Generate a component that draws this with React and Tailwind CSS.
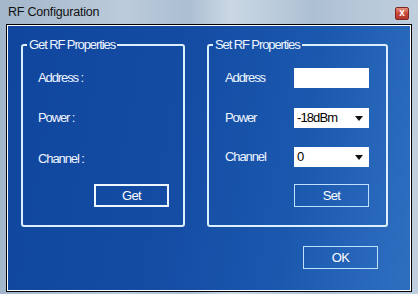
import React from 'react'

const font = { fontFamily: '"Liberation Sans", Arial, sans-serif' }

const Caret = () => (
  <svg width="8" height="5" viewBox="0 0 8 5" className="shrink-0">
    <path d="M0 0 H8 L4 5 Z" fill="#111" />
  </svg>
)

const Field = ({ children, className = '' }) => (
  <div className={`w-[75px] h-[20px] bg-white flex items-center pl-[3px] pr-[6px] text-[13px] tracking-[-0.9px] text-black ${className}`}>
    {children}
  </div>
)

const Select = ({ value }) => (
  <Field className="justify-between">
    <span>{value}</span>
    <Caret />
  </Field>
)

const Label = ({ children }) => (
  <div className="h-[20px] flex items-center text-[13px] tracking-[-1.1px] text-[#eef5ff]">{children}</div>
)

const Button = ({ children, bold }) => (
  <button
    className={`w-[75px] h-[23px] flex items-center justify-center text-[13px] text-white tracking-[-0.6px] ${
      bold ? 'border-2 border-[#eef7ff]' : 'border border-[#bfe0ff]'
    }`}
  >
    {children}
  </button>
)

const Group = ({ title, width, padX, children, button }) => (
  <fieldset className={`${width} h-[189px] border-2 border-[#dcefff] rounded-[3px] min-w-0`}>
    <legend className="ml-[4px] px-[2px] h-[14px] leading-[14px] text-[13px] tracking-[-1.1px] text-[#eef5ff]">
      {title}
    </legend>
    <div className={`flex flex-col h-[173px] ${padX}`}>
      <div className="mt-[16px] flex flex-col gap-[20px]">{children}</div>
      <div className="mt-auto mb-[18px] flex justify-end">{button}</div>
    </div>
  </fieldset>
)

export default function App() {
  return (
    <div
      className="w-[418px] h-[294px] flex flex-col overflow-hidden bg-[linear-gradient(90deg,#a3b6ca_0%,#bccbdb_30%,#abbed2_45%,#cad8e4_55%,#adc0d3_75%,#c0cfde_100%)]"
      style={font}
    >
      {/* title bar */}
      <div className="h-[24px] flex items-center justify-between pl-[8px] pr-[9px] shrink-0">
        <span className="text-[12.5px] text-[#111] tracking-[-0.2px]">RF Configuration</span>
        <div className="w-[14px] h-[13px] mt-[2px] rounded-[2px] border border-[#7a2a22] bg-[linear-gradient(180deg,#e7907f_0%,#c9483a_50%,#b5372b_100%)] flex items-center justify-center">
          <span className="text-[10px] leading-none font-bold text-white">x</span>
        </div>
      </div>

      {/* client area */}
      <div className="mx-[6px] mb-[2px] flex-1 border border-black">
        <div className="h-full border border-white">
          <div className="h-full pt-[12px] pl-[13px] flex flex-col bg-[linear-gradient(100deg,#10469e_0%,#144ba3_40%,#1a58ae_70%,#2766b9_88%,#2f6fc0_100%)]">
            <div className="flex gap-[22px]">
              <Group
                title="Get RF Properties"
                width="w-[164px]"
                padX="pl-[15px] pr-[14px]"
                button={<Button bold>Get</Button>}
              >
                <Label>Address :</Label>
                <Label>Power :</Label>
                <div className="mt-[1px]"><Label>Channel :</Label></div>
              </Group>
              <Group
                title="Set RF Properties"
                width="w-[181px]"
                padX="pl-[16px] pr-[17px]"
                button={<Button>Set</Button>}
              >
                <div className="flex items-center">
                  <div className="w-[69px]"><Label>Address</Label></div>
                  <Field />
                </div>
                <div className="flex items-center">
                  <div className="w-[69px]"><Label>Power</Label></div>
                  <Select value="-18dBm" />
                </div>
                <div className="flex items-center -mt-[1px]">
                  <div className="w-[69px]"><Label>Channel</Label></div>
                  <Select value="0" />
                </div>
              </Group>
            </div>
            <div className="mt-[19px] mr-[32px] flex justify-end">
              <Button>OK</Button>
            </div>
          </div>
        </div>
      </div>
    </div>
  )
}
